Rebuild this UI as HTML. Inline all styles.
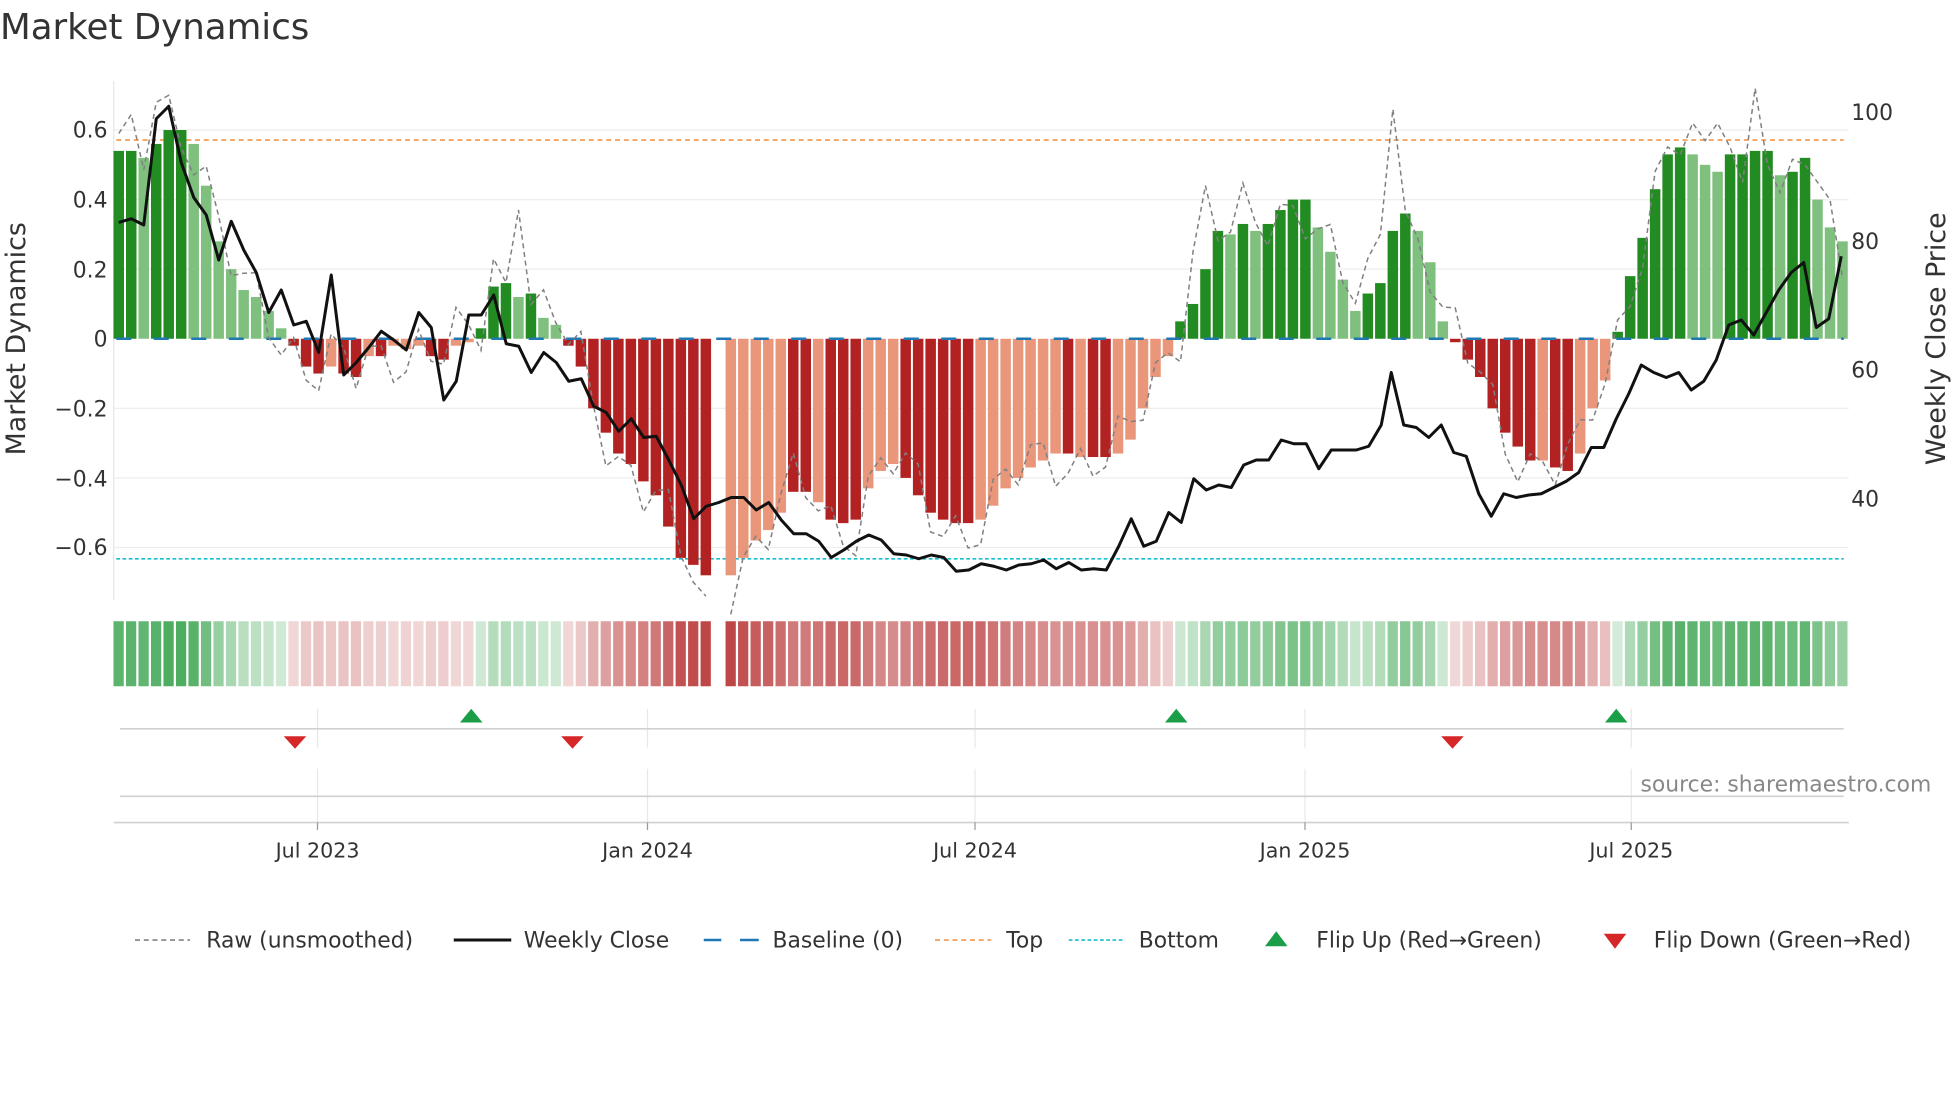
<!DOCTYPE html>
<html><head><meta charset="utf-8"><style>
html,body{margin:0;padding:0;background:#fff;}
svg{display:block;font-family:"DejaVu Sans","Liberation Sans",sans-serif;}
</style></head><body>
<svg id="s" width="1960" height="1102" viewBox="0 0 1568 881.6" xmlns="http://www.w3.org/2000/svg">
<rect width="1568" height="882" fill="#fff"/>
<text x="0" y="31" font-size="28.5" fill="#333">Market Dynamics</text>
<g id="grid"></g>
<line x1="91" y1="65" x2="91" y2="480" stroke="#e6e6e6"/>
<line x1="93" y1="112" x2="1475" y2="112" stroke="#f4a460" stroke-width="1.5" stroke-dasharray="4,3"/>
<line x1="93" y1="447" x2="1475" y2="447" stroke="#17becf" stroke-width="1.3" stroke-dasharray="3,2"/>
<g id="bars"></g>
<line x1="93" y1="271" x2="1475" y2="271" stroke="#1f77b4" stroke-width="2" stroke-dasharray="12,18"/>
<path id="raw" fill="none" stroke="#808080" stroke-width="1.2" stroke-dasharray="4,3"/>
<path id="close" fill="none" stroke="#111" stroke-width="2.4" stroke-linejoin="round"/>
<g id="strip"></g>
<g stroke="#e8e8e8">
<line x1="254" y1="567" x2="254" y2="598"/><line x1="518" y1="567" x2="518" y2="598"/><line x1="780" y1="567" x2="780" y2="598"/><line x1="1044" y1="567" x2="1044" y2="598"/><line x1="1305" y1="567" x2="1305" y2="598"/>
<line x1="254" y1="615" x2="254" y2="658"/><line x1="518" y1="615" x2="518" y2="658"/><line x1="780" y1="615" x2="780" y2="658"/><line x1="1044" y1="615" x2="1044" y2="658"/><line x1="1305" y1="615" x2="1305" y2="658"/>
</g>
<line x1="96" y1="583" x2="1475" y2="583" stroke="#d0d0d0" stroke-width="1.3"/>
<line x1="96" y1="637" x2="1475" y2="637" stroke="#d0d0d0" stroke-width="1.3"/>
<line x1="91" y1="658" x2="1479" y2="658" stroke="#d0d0d0" stroke-width="1.3"/>
<g fill="#1a9e48"><path d="M368,578 L377,567 L386,578Z"/><path d="M932,578 L941,567 L950,578Z"/><path d="M1284,578 L1293,567 L1302,578Z"/></g>
<g fill="#d62728"><path d="M227,589 L245,589 L236,599Z"/><path d="M449,589 L467,589 L458,599Z"/><path d="M1153,589 L1171,589 L1162,599Z"/></g>
<g stroke="#999"><line x1="254" y1="658" x2="254" y2="664"/><line x1="518" y1="658" x2="518" y2="664"/><line x1="780" y1="658" x2="780" y2="664"/><line x1="1044" y1="658" x2="1044" y2="664"/><line x1="1305" y1="658" x2="1305" y2="664"/></g>
<g font-size="16.5" fill="#333" text-anchor="middle">
<text x="254" y="686">Jul 2023</text><text x="518" y="686">Jan 2024</text><text x="780" y="686">Jul 2024</text><text x="1044" y="686">Jan 2025</text><text x="1305" y="686">Jul 2025</text>
</g>
<g font-size="17.5" fill="#333" text-anchor="end">
<text x="86" y="110">0.6</text><text x="86" y="166">0.4</text><text x="86" y="222">0.2</text><text x="86" y="277">0</text><text x="86" y="333">−0.2</text><text x="86" y="389">−0.4</text><text x="86" y="444">−0.6</text>
</g>
<g font-size="17.5" fill="#333">
<text x="1481" y="96">100</text><text x="1481" y="199">80</text><text x="1481" y="302">60</text><text x="1481" y="405">40</text>
</g>
<text transform="translate(20,271) rotate(-90)" font-size="21.5" fill="#333" text-anchor="middle">Market Dynamics</text>
<text transform="translate(1556,271) rotate(-90)" font-size="21.5" fill="#333" text-anchor="middle">Weekly Close Price</text>
<text x="1545" y="633" font-size="17.5" fill="#888" text-anchor="end">source: sharemaestro.com</text>
<g font-size="17.5" fill="#333">
<line x1="108" y1="752" x2="152" y2="752" stroke="#808080" stroke-width="1.3" stroke-dasharray="4,3"/><text x="165" y="758">Raw (unsmoothed)</text>
<line x1="363" y1="752" x2="409" y2="752" stroke="#111" stroke-width="2.4"/><text x="419" y="758">Weekly Close</text>
<line x1="563" y1="752" x2="577" y2="752" stroke="#1f77b4" stroke-width="2"/><line x1="592" y1="752" x2="607" y2="752" stroke="#1f77b4" stroke-width="2"/><text x="618" y="758">Baseline (0)</text>
<line x1="748" y1="752" x2="793" y2="752" stroke="#f4a460" stroke-width="1.5" stroke-dasharray="4,3"/><text x="805" y="758">Top</text>
<line x1="855" y1="752" x2="900" y2="752" stroke="#17becf" stroke-width="1.3" stroke-dasharray="3,2"/><text x="911" y="758">Bottom</text>
<path d="M1012,757 L1021,745 L1030,757Z" fill="#1a9e48"/><text x="1053" y="758">Flip Up (Red→Green)</text>
<path d="M1283,747 L1301,747 L1292,759Z" fill="#d62728"/><text x="1323" y="758">Flip Down (Green→Red)</text>
</g>
</svg>
<script>
var NS="http://www.w3.org/2000/svg";
function el(p,t,a){var e=document.createElementNS(NS,t);for(var k in a)e.setAttribute(k,a[k]);document.getElementById(p).appendChild(e);return e;}
[0.6,0.4,0.2,-0.2,-0.4,-0.6].forEach(function(v){var y=271-v*278.3;el("grid","line",{x1:91,x2:1479,y1:y,y2:y,stroke:"#eeeeee","stroke-width":1});});
var B=[[.54,1],[.54,1],[.52,0],[.56,1],[.60,1],[.60,1],[.56,0],[.44,0],[.28,0],[.20,0],[.14,0],[.12,0],[.08,0],[.03,0],
[-.02,1],[-.08,1],[-.10,1],[-.08,0],[-.10,1],[-.11,1],[-.05,0],[-.05,1],[-.02,0],[-.03,0],[-.02,0],[-.05,1],[-.06,1],[-.02,0],[-.01,0],
[.03,1],[.15,1],[.16,1],[.12,0],[.13,1],[.06,0],[.04,0],
[-.02,1],[-.08,1],[-.20,1],[-.27,1],[-.33,1],[-.36,1],[-.41,1],[-.45,1],[-.54,1],[-.63,1],[-.65,1],[-.68,1],[null,0],
[-.68,0],[-.63,0],[-.58,0],[-.55,0],[-.50,0],[-.44,1],[-.44,1],[-.47,0],[-.52,1],[-.53,1],[-.52,1],[-.43,0],[-.38,0],[-.36,0],
[-.40,1],[-.45,1],[-.50,1],[-.52,1],[-.53,1],[-.53,1],[-.52,0],[-.48,0],[-.43,0],[-.40,0],[-.37,0],[-.35,0],[-.33,0],[-.33,1],[-.34,0],[-.34,1],[-.34,1],[-.33,0],[-.29,0],[-.20,0],[-.11,0],[-.05,0],
[.05,1],[.10,1],[.20,1],[.31,1],[.30,0],[.33,1],[.31,0],[.33,1],[.37,1],[.40,1],[.40,1],[.32,0],[.25,0],[.17,0],[.08,0],[.13,1],[.16,1],[.31,1],[.36,1],[.31,0],[.22,0],[.05,0],
[-.01,1],[-.06,1],[-.11,1],[-.20,1],[-.27,1],[-.31,1],[-.35,1],[-.35,0],[-.37,1],[-.38,1],[-.33,0],[-.20,0],[-.12,0],
[.02,1],[.18,1],[.29,1],[.43,1],[.53,1],[.55,1],[.53,0],[.50,0],[.48,0],[.53,1],[.53,1],[.54,1],[.54,1],[.47,0],[.48,1],[.52,1],[.40,0],[.32,0],[.28,0]];
var SP=(1474-95)/(B.length-1);
var raw=[];
B.forEach(function(b,i){var x=95+i*SP,v=b[0];
 if(v===null){raw.push(null);return;}
 var y0=271,y1=271-v*278.3,c=v>=0?(b[1]?"#228b22":"#7fc07f"):(b[1]?"#b22222":"#e9967a");
 el("bars","rect",{x:x-4.2,y:Math.min(y0,y1),width:8.4,height:Math.max(1,Math.abs(y1-y0)),fill:c});
 var a=0.2+0.8*Math.min(1,Math.abs(v)/0.68);
 var sc=v>=0?"rgba(60,165,80,"+a.toFixed(2)+")":"rgba(190,70,70,"+a.toFixed(2)+")";
 el("strip","rect",{x:x-4.2,y:497,width:8.2,height:52,fill:sc});
 raw.push(v+0.07*Math.sin(i*1.9)+0.05*Math.cos(i*0.7));
});
var ov={3:.68,4:.70,30:.23,32:.37,46:-.70,47:-.74,86:.25,87:.44,101:.3,102:.66,128:.62,131:.72,129:.55,130:.45,132:.5,133:.42,135:.5,136:.45,137:.4};
for(var k in ov)raw[k]=ov[k];
var d="",pen=false;raw.forEach(function(v,i){if(v===null){pen=false;return;}d+=(pen?"L":"M")+(95+i*SP).toFixed(1)+","+(271-v*278.3).toFixed(1);pen=true;});
document.getElementById("raw").setAttribute("d",d);
var C=[95,178,105,175,115,180,125,95,135,85,145,130,155,158,165,172,175,208,185,177,195,200,205,218,215,250,225,232,235,260,245,257,255,282,265,220,275,300,285,290,295,278,305,265,315,272,325,280,335,250,345,262,355,320,365,305,375,252,385,252,395,236,405,275,415,277,425,298,435,282,445,290,455,305,465,303,475,325,485,330,495,345,505,335,515,350,525,349,535,368,545,388,555,415,565,405,575,402,585,398,595,398,605,408,615,402,625,416,635,427,645,427,655,433,665,446,675,440,685,433,695,428,705,432,715,443,725,444,735,447,745,444,755,446,765,457,775,456,785,451,795,453,805,456,815,452,825,451,835,448,845,455,855,450,865,456,875,455,885,456,895,437,905,415,915,437,925,433,935,410,945,418,955,383,965,392,975,388,985,390,995,372,1005,368,1015,368,1025,352,1035,355,1045,355,1055,375,1065,360,1075,360,1085,360,1095,357,1105,340,1113,298,1123,340,1133,342,1143,350,1153,340,1163,362,1173,365,1183,395,1193,413,1203,395,1213,398,1223,396,1233,395,1243,390,1253,385,1263,378,1273,358,1283,358,1293,335,1303,315,1313,292,1323,298,1333,302,1343,298,1353,312,1363,305,1373,288,1383,260,1393,256,1403,268,1413,250,1423,232,1433,218,1443,210,1453,262,1463,255,1473,205];
var cd="";for(var j=0;j<C.length;j+=2)cd+=(j?"L":"M")+C[j]+","+C[j+1];
document.getElementById("close").setAttribute("d",cd);
</script>
</body></html>
